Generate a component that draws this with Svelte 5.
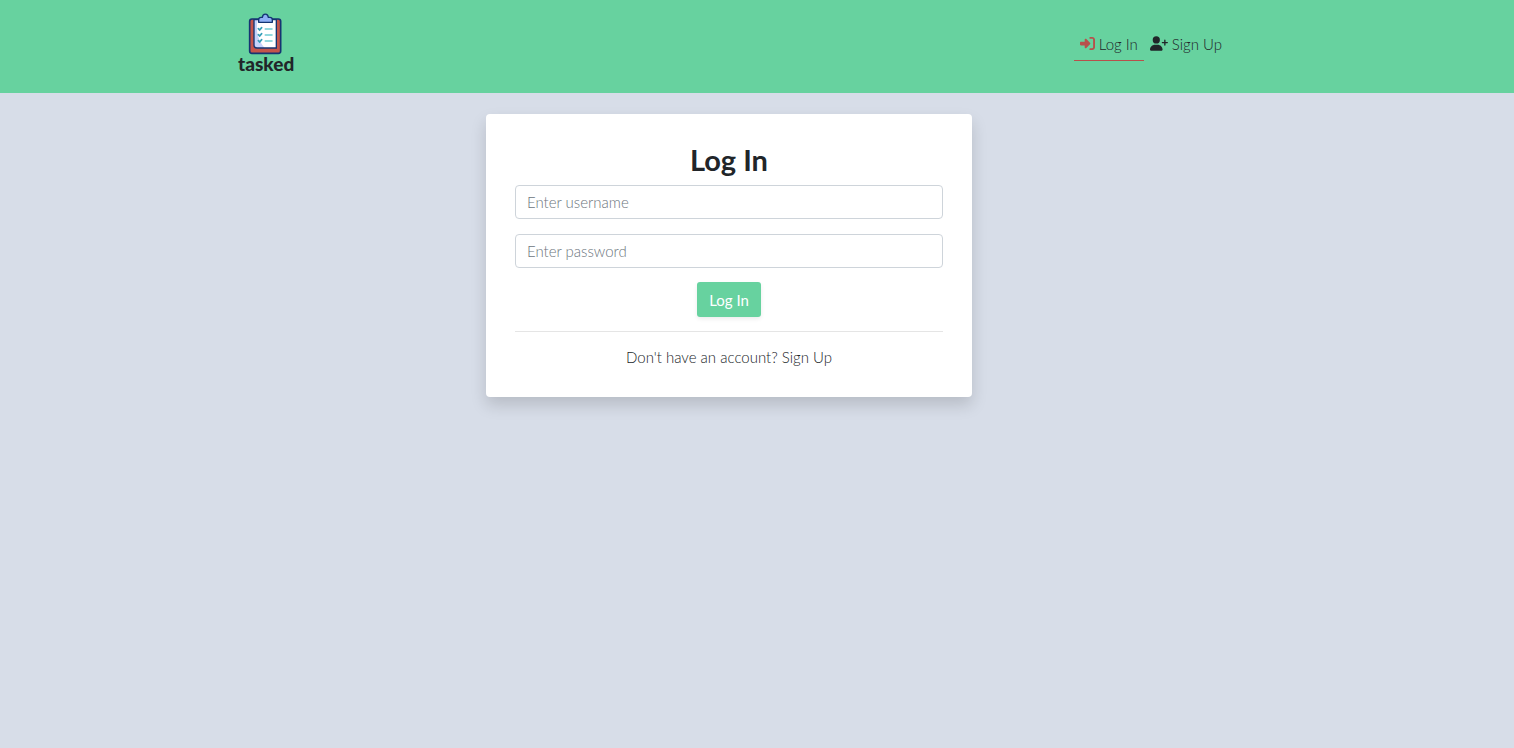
<script>
  let username = $state('');
  let password = $state('');
</script>

<div class="page">
  <header>
    <div class="bar">
      <a class="brand" href="#home">
        <svg width="36" height="44" viewBox="12 12 108 132" aria-hidden="true">
          <rect x="17" y="33" width="93" height="103" rx="7" fill="#c4554b" stroke="#143573" stroke-width="5" />
          <path d="M30 35H97V120H39Q30 120 30 111Z" fill="#fff" />
          <path d="M30 35H41C33 74 46 101 62 120H39Q30 120 30 111Z" fill="#c6d2fb" />
          <path d="M30 35H97V120H39Q30 120 30 111Z" fill="none" stroke="#143573" stroke-width="4" />
          <path d="M44 43V35Q44 28 51 28H55C56 15 72 15 73 28H78Q85 28 85 35V43Z" fill="#8eb0f5" stroke="#143573" stroke-width="4" stroke-linejoin="round" />
          <g fill="none" stroke-linecap="round" stroke-width="5">
            <path d="M64 63H84M64 81H84M64 99H84" stroke="#6fcbd3" />
            <path d="M43 62l4 4 6-7M43 80l4 4 6-7M43 98l4 4 6-7" stroke="#369fb9" />
          </g>
        </svg>
        <span>tasked</span>
      </a>
      <nav>
        <a class="link active" href="#login">
          <svg width="15" height="15" viewBox="0 0 512 512" aria-hidden="true"><path fill="currentColor" d="M217.9 105.9L340.7 228.7c7.2 7.2 11.3 17.1 11.3 27.3s-4.1 20.1-11.3 27.3L217.9 406.1c-6.4 6.4-15 9.9-24 9.9c-18.7 0-33.9-15.2-33.9-33.9l0-62.1L32 320c-17.7 0-32-14.3-32-32l0-64c0-17.7 14.3-32 32-32l128 0 0-62.1c0-18.7 15.2-33.9 33.9-33.9c9 0 17.6 3.6 24 9.9zM352 416l64 0c17.7 0 32-14.3 32-32l0-256c0-17.7-14.3-32-32-32l-64 0c-17.7 0-32-14.3-32-32s14.3-32 32-32l64 0c53 0 96 43 96 96l0 256c0 53-43 96-96 96l-64 0c-17.7 0-32-14.3-32-32s14.3-32 32-32z" /></svg>
          <span>Log In</span>
        </a>
        <a class="link" href="#signup">
          <svg width="18" height="15" viewBox="0 0 640 512" aria-hidden="true"><path fill="currentColor" d="M96 128a128 128 0 1 1 256 0A128 128 0 1 1 96 128zM0 482.3C0 383.8 79.8 304 178.3 304l91.4 0C368.2 304 448 383.8 448 482.3c0 16.4-13.3 29.7-29.7 29.7L29.7 512C13.3 512 0 498.7 0 482.3zM504 312l0-64-64 0c-13.3 0-24-10.7-24-24s10.7-24 24-24l64 0 0-64c0-13.3 10.7-24 24-24s24 10.7 24 24l0 64 64 0c13.3 0 24 10.7 24 24s-10.7 24-24 24l-64 0 0 64c0 13.3-10.7 24-24 24s-24-10.7-24-24z" /></svg>
          <span>Sign Up</span>
        </a>
      </nav>
    </div>
  </header>

  <main>
    <section class="card">
      <h1>Log In</h1>
      <form onsubmit={(e) => e.preventDefault()}>
        <input type="text" aria-label="Username" placeholder="Enter username" bind:value={username} />
        <input type="password" aria-label="Password" placeholder="Enter password" bind:value={password} />
        <button type="submit">Log In</button>
      </form>
      <hr />
      <p>Don't have an account? <a href="#signup">Sign Up</a></p>
    </section>
  </main>
</div>

<style>
  :global(body) {
    margin: 0;
    background: #d7dde8;
  }
  .page {
    color: #212529;
    font: 300 15px/22px Lato, sans-serif;
  }
  .page * {
    box-sizing: border-box;
  }
  a {
    color: inherit;
    text-decoration: none;
  }
  header {
    background: #67d29f;
    padding: 12px 54px 16px 0;
  }
  .bar {
    max-width: 984px;
    margin: 0 auto;
    display: flex;
    justify-content: space-between;
  }
  .brand {
    height: 65px;
    display: flex;
    flex-direction: column;
    align-items: center;
    font-size: 19px;
    font-weight: 900;
    line-height: 16px;
  }
  .brand svg {
    flex: none;
  }
  nav {
    display: flex;
    padding-top: 15px;
  }
  .link {
    display: flex;
    align-items: center;
    gap: 4px;
    height: 34px;
    padding: 0 6px;
    border-bottom: 1px solid transparent;
  }
  .link:last-child {
    padding-right: 0;
  }
  .link.active {
    border-bottom: 1px solid #b8504b;
  }
  .active svg {
    color: #b8504b;
  }
  main {
    padding: 21px 56px 32px 0;
  }
  .card {
    max-width: 486px;
    margin: 0 auto;
    padding: 28px 29px;
    background: #fff;
    border-radius: 4px;
    box-shadow: 0 8px 16px rgb(0 0 0 / 15%);
    text-align: center;
  }
  h1 {
    margin: 0 0 8px;
    font-size: 29px;
    line-height: 35px;
    font-weight: 700;
  }
  form {
    display: flex;
    flex-direction: column;
    align-items: center;
  }
  input {
    width: 100%;
    height: 34px;
    margin: 0 0 15px;
    padding: 0 11px;
    border: 1px solid #ced4da;
    border-radius: 4px;
    background: #fff;
    color: #495057;
    font: inherit;
  }
  input:last-of-type {
    margin-bottom: 14px;
  }
  input::placeholder {
    color: #6c757d;
    opacity: 1;
  }
  button {
    height: 35px;
    padding: 0 12px;
    border: 0;
    border-radius: 3px;
    background: #67d29f;
    box-shadow: 0 2px 4px rgb(0 0 0 / 8%);
    color: #fff;
    font: inherit;
    font-weight: 400;
  }
  hr {
    margin: 14px 0;
    border: 0;
    border-top: 1px solid #e5e5e5;
  }
  p {
    margin: 0 0 1px;
  }
</style>
